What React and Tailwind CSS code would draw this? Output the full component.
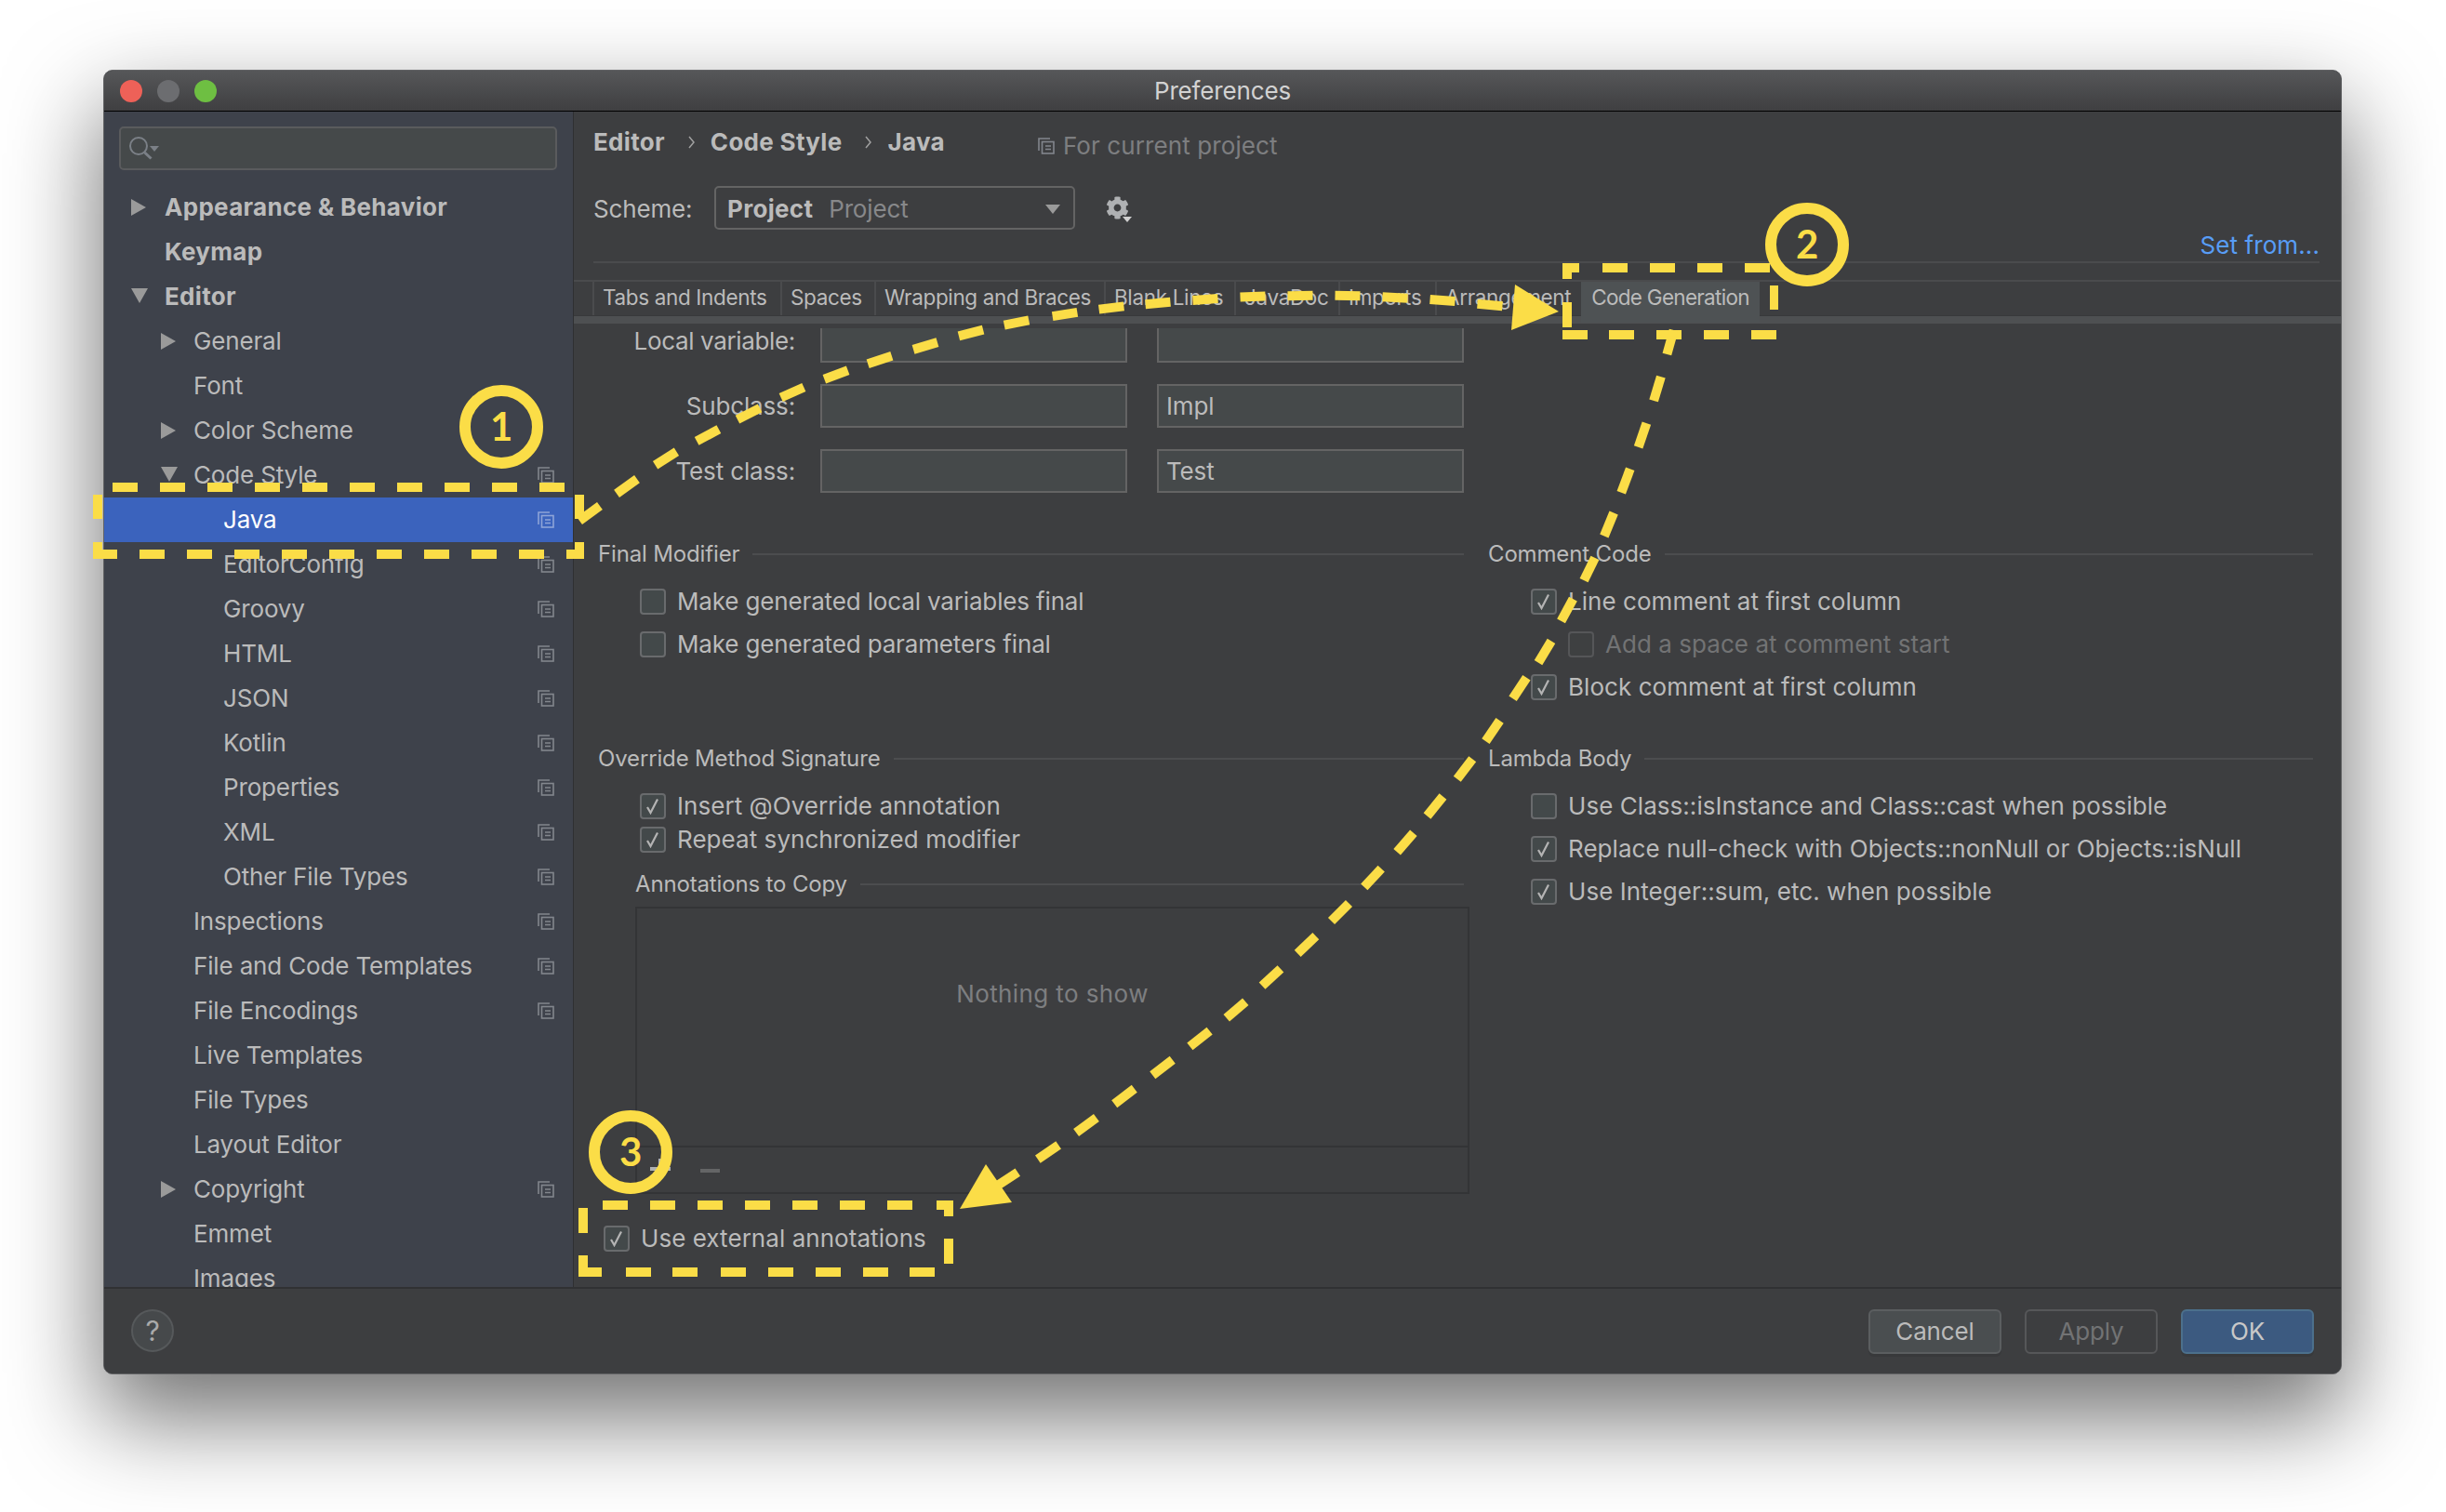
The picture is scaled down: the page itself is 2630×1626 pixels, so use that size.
import { FaCog } from 'react-icons/fa';

const YELLOW = '#fbdd47';

const tree = [
  { label: 'Appearance & Behavior', level: 0, arrow: 'right' },
  { label: 'Keymap', level: 0 },
  { label: 'Editor', level: 0, arrow: 'down' },
  { label: 'General', level: 1, arrow: 'right' },
  { label: 'Font', level: 1 },
  { label: 'Color Scheme', level: 1, arrow: 'right' },
  { label: 'Code Style', level: 1, arrow: 'down', copy: true },
  { label: 'Java', level: 2, copy: true, selected: true },
  { label: 'EditorConfig', level: 2, copy: true },
  { label: 'Groovy', level: 2, copy: true },
  { label: 'HTML', level: 2, copy: true },
  { label: 'JSON', level: 2, copy: true },
  { label: 'Kotlin', level: 2, copy: true },
  { label: 'Properties', level: 2, copy: true },
  { label: 'XML', level: 2, copy: true },
  { label: 'Other File Types', level: 2, copy: true },
  { label: 'Inspections', level: 1, copy: true },
  { label: 'File and Code Templates', level: 1, copy: true },
  { label: 'File Encodings', level: 1, copy: true },
  { label: 'Live Templates', level: 1 },
  { label: 'File Types', level: 1 },
  { label: 'Layout Editor', level: 1 },
  { label: 'Copyright', level: 1, arrow: 'right', copy: true },
  { label: 'Emmet', level: 1 },
  { label: 'Images', level: 1 },
];

const tabs = [
  { label: 'Tabs and Indents', width: 'w-[202px]' },
  { label: 'Spaces', width: 'w-[101px]' },
  { label: 'Wrapping and Braces', width: 'w-[247px]' },
  { label: 'Blank Lines', width: 'w-[140px]' },
  { label: 'JavaDoc', width: 'w-[112px]' },
  { label: 'Imports', width: 'w-[104px]' },
  { label: 'Arrangement', width: 'w-[157px]' },
];

// centres of the hand-drawn dashes, read off the screenshot
const curveOne = [
  [634, 552], [674, 523], [716, 493], [761, 468], [805, 445], [852, 422], [899, 403], [946, 387], [995, 372],
  [1044, 358], [1093, 347], [1145, 338], [1195, 331], [1245, 326], [1296, 322], [1347, 319], [1398, 318],
  [1449, 318], [1500, 320], [1551, 323], [1602, 328],
];
const curveTwo = [
  [1796, 368], [1782, 418], [1766, 468], [1748, 517], [1730, 564], [1709, 612], [1685, 656], [1661, 701],
  [1634, 740], [1605, 786], [1575, 827], [1543, 867], [1511, 906], [1476, 944], [1441, 981], [1405, 1016],
  [1367, 1051], [1329, 1086], [1290, 1117], [1250, 1148], [1209, 1179], [1168, 1210], [1127, 1239], [1083, 1268],
];
const boxDashes = [
  // box 1
  ...[121, 172, 223, 274, 325, 376, 427, 478, 529, 580].map((x) => [x, 519, 27, 10]),
  [100, 532, 10, 26], [100, 583, 10, 18], [100, 591, 26, 10],
  ...[150, 201, 252, 303, 354, 405, 456, 507, 558].map((x) => [x, 591, 27, 10]),
  [609, 591, 19, 10], [618, 583, 10, 18], [618, 532, 10, 26],
  // box 2
  [1680, 283, 10, 17], [1680, 283, 18, 10],
  ...[1723, 1774, 1825, 1876].map((x) => [x, 283, 27, 10]),
  [1680, 325, 10, 27], [1903, 307, 9, 26],
  ...[1680, 1730, 1781, 1832, 1883].map((x) => [x, 355, 27, 10]),
  // box 3
  ...[648, 699, 750, 801, 852, 903, 954].map((x) => [x, 1291, 27, 10]),
  [1007, 1291, 18, 10], [1015, 1291, 10, 17], [1015, 1332, 10, 27],
  [622, 1299, 10, 27], [622, 1350, 10, 23], [622, 1363, 25, 10],
  ...[673, 723, 775, 826, 877, 928, 978].map((x) => [x, 1363, 27, 10]),
];

function CurveDashes({ points }) {
  return points.map(([x, y], i) => {
    const [px, py] = points[Math.max(i - 1, 0)];
    const [nx, ny] = points[Math.min(i + 1, points.length - 1)];
    const len = Math.hypot(nx - px, ny - py);
    const dx = ((nx - px) / len) * 13.5;
    const dy = ((ny - py) / len) * 13.5;
    return <line key={i} x1={x - dx} y1={y - dy} x2={x + dx} y2={y + dy} stroke={YELLOW} strokeWidth="10" />;
  });
}

function Annotations() {
  const circles = [
    [539, 459, '1'],
    [1943, 263, '2'],
    [678, 1239, '3'],
  ];
  return (
    <svg className="absolute inset-0 pointer-events-none" width="2630" height="1626" viewBox="0 0 2630 1626">
      {boxDashes.map(([x, y, w, h], i) => (
        <rect key={i} x={x} y={y} width={w} height={h} fill={YELLOW} />
      ))}
      <CurveDashes points={curveOne} />
      <CurveDashes points={curveTwo} />
      <polygon points="1676,335 1629,306 1625,355" fill={YELLOW} />
      <polygon points="1032,1300 1060,1252 1088,1293" fill={YELLOW} />
      {circles.map(([cx, cy, n]) => (
        <g key={n}>
          <circle cx={cx} cy={cy} r="39" fill="none" stroke={YELLOW} strokeWidth="12" />
          <text x={cx} y={cy + 15} textAnchor="middle" fill={YELLOW} fontSize="42" fontWeight="700" fontFamily="Lato, sans-serif">
            {n}
          </text>
        </g>
      ))}
    </svg>
  );
}

function CopyIcon({ className }) {
  return (
    <svg className={className} width="18" height="18" viewBox="0 0 18 18" fill="none" stroke="currentColor" strokeWidth="1.6">
      <path d="M1 14V1h12" />
      <rect x="4.5" y="4.5" width="12.5" height="12.5" />
      <path d="M8 9h6M8 12.5h6" />
    </svg>
  );
}

function Arrow({ dir }) {
  if (dir === 'down') {
    return (
      <svg width="18" height="16" viewBox="0 0 18 16" className="text-[#9a9a9a]">
        <path d="M0 0h18L9 16z" fill="currentColor" />
      </svg>
    );
  }
  return (
    <svg width="16" height="18" viewBox="0 0 16 18" className="text-[#9a9a9a]">
      <path d="M0 0l16 9-16 9z" fill="currentColor" />
    </svg>
  );
}

function TreeRow({ item }) {
  const indent = { 0: 'pl-[65px]', 1: 'pl-[96px]', 2: 'pl-[128px]' }[item.level];
  const arrowPos = item.level === 0 ? 'left-[29px]' : 'left-[61px]';
  return (
    <div className={`relative h-12 shrink-0 flex items-center ${indent} ${item.selected ? 'bg-[#3b63bd] text-white' : 'text-[#bbbbbb]'} ${item.level === 0 ? 'font-bold tracking-[0.3px]' : ''}`}>
      {item.arrow && (
        <span className={`absolute ${arrowPos} top-[15px]`}>
          <Arrow dir={item.arrow} />
        </span>
      )}
      <span>{item.label}</span>
      {item.copy && <CopyIcon className={`absolute left-[466px] top-[15px] ${item.selected ? 'text-[#8ea4d8]' : 'text-[#82868d]'}`} />}
    </div>
  );
}

function Sidebar() {
  return (
    <div className="w-[505px] shrink-0 bg-[#3e424b] border-r border-[#2f3032] overflow-hidden flex flex-col">
      <div className="ml-4 mt-4 w-[471px] h-[47px] shrink-0 rounded-[5px] border-2 border-[#5a5b5d] bg-[#45494a] flex items-center pl-[8px]">
        <svg width="34" height="30" viewBox="0 0 34 30" fill="none" stroke="#7b8087">
          <circle cx="11" cy="12" r="9" strokeWidth="2" />
          <path d="M17.5 19l7 6.500" strokeWidth="3" />
          <path d="M23 12h10l-5 6z" fill="#7b8087" stroke="none" />
        </svg>
      </div>
      <div className="mt-4 flex flex-col">
        {tree.map((item) => (
          <TreeRow key={item.label} item={item} />
        ))}
      </div>
    </div>
  );
}

function Check({ on, dim }) {
  return (
    <span className={`w-[28px] h-[28px] shrink-0 rounded-[4px] border-2 flex items-center justify-center ${dim ? 'border-[#555658] bg-[#3e4041]' : 'border-[#696b6d] bg-[#43494a]'}`}>
      {on && (
        <svg width="18" height="18" viewBox="0 0 18 18" fill="none" stroke="#b4b4b4" strokeWidth="2.200">
          <path d="M3 10l3.500 6L14 1.500" />
        </svg>
      )}
    </span>
  );
}

function CheckRow({ label, on, dim, tight, className = '' }) {
  return (
    <div className={`h-[28px] flex items-center gap-3 ${tight ? 'tracking-[-0.15px]' : 'tracking-[0.05px]'} ${dim ? 'text-[#727374]' : 'text-[#bbbbbb]'} ${className}`}>
      <Check on={on} dim={dim} />
      <span className="whitespace-nowrap">{label}</span>
    </div>
  );
}

function GroupTitle({ title, className = '' }) {
  return (
    <div className={`h-[30px] flex items-center gap-3.5 text-[#bbbbbb] text-[24px] ${className}`}>
      <span className="whitespace-nowrap">{title}</span>
      <span className="flex-1 h-0.5 bg-[#4c4d4f]" />
    </div>
  );
}

function NameField({ value, className = '' }) {
  return (
    <div className={`bg-[#45494a] border-2 border-[#646464] flex items-center pl-2 text-[#bbbbbb] ${className}`}>
      {value}
    </div>
  );
}

function FieldRow({ label, suffix, top, short }) {
  const h = short ? 'h-[37px] border-t-0' : 'h-[47px]';
  return (
    <div className={`flex items-center ${top}`}>
      <div className={`w-[238px] text-right text-[#bbbbbb] ${short ? '-mt-[10px] tracking-[-0.35px]' : ''}`}>{label}</div>
      <NameField className={`ml-[27px] w-[330px] ${h}`} />
      <NameField value={suffix} className={`ml-[32px] w-[330px] ${h}`} />
    </div>
  );
}

function Crumb({ className }) {
  return (
    <svg className={`ml-[24px] ${className}`} width="9" height="14" viewBox="0 0 9 14" fill="none" stroke="#a0a0a0" strokeWidth="1.500">
      <path d="M2 1l5 6-5 6" />
    </svg>
  );
}

function MainPane() {
  return (
    <div className="flex-1 min-w-0 flex flex-col overflow-hidden">
      {/* Header */}
      <div className="h-[66px] shrink-0 pl-[21px] flex items-center font-bold tracking-[0.3px] text-[#bbbbbb]">
        <span>Editor</span>
        <Crumb className="mr-[16px]" />
        <span>Code Style</span>
        <Crumb className="mr-[16px]" />
        <span>Java</span>
        <CopyIcon className="ml-[100px] mt-2 text-[#82868d]" />
        <span className="ml-[9px] mt-2 font-normal tracking-[0.1px] text-[#7d7e80]">For current project</span>
      </div>
      <div className="mt-[14px] h-[47px] shrink-0 pl-[21px] flex items-center text-[#bbbbbb]">
        <span className="w-[130px] shrink-0 mt-[2px]">Scheme:</span>
        <div className="w-[388px] h-[47px] rounded-[5px] border-2 border-[#646464] flex items-center pl-[12px] relative">
          <span className="font-bold tracking-[0.3px] mt-[2px]">Project</span>
          <span className="ml-[17px] mt-[2px] text-[#87888a]">Project</span>
          <svg className="absolute right-[14px] top-[18px]" width="16" height="10" viewBox="0 0 16 10">
            <path d="M0 0h16L8 10z" fill="#9a9a9a" />
          </svg>
        </div>
        <div className="ml-[33px] relative">
          <FaCog className="text-[#afb1b3] w-[25px] h-[25px]" />
          <svg className="absolute left-[18px] top-[22px]" width="10" height="6" viewBox="0 0 10 6">
            <path d="M0 0h10L5 6z" fill="#d0d0d0" />
          </svg>
        </div>
      </div>
      <div className="h-[34px] shrink-0 flex items-center justify-end pr-[23px] tracking-[0.1px] text-[#589df6]">Set from...</div>
      <div className="h-0.5 shrink-0 ml-[21px] mr-[23px] bg-[#4a4b4d]" />
      {/* Tabs */}
      <div className="mt-[18px] shrink-0 border-t-2 border-[#4a4b4d]">
        <div className="h-[36px] pl-5 flex text-[22.500px] tracking-[-0.35px] text-[#bbbbbb]">
          {tabs.map((tab) => (
            <div key={tab.label} className={`${tab.width} border-l-2 border-[#4a4b4d] flex items-center pl-[9px] pb-[2px] whitespace-nowrap`}>
              {tab.label}
            </div>
          ))}
          <div className="w-[192px] bg-[#4e5254] flex items-center justify-center h-[44px] pb-[10px] z-10 tracking-[-0.7px]">Code Generation</div>
        </div>
        <div className="h-[9px] bg-[#4e5052] border-t border-[#38393b]" />
      </div>
      {/* Naming fields */}
      <div className="mt-[5px] shrink-0">
        <FieldRow label="Local variable:" short />
        <FieldRow label="Subclass:" suffix="Impl" top="mt-[23px]" />
        <FieldRow label="Test class:" suffix="Test" top="mt-[23px]" />
      </div>
      {/* Options */}
      <div className="mt-[51px] pl-[26px] flex gap-[26px]">
        <div className="w-[931px] shrink-0">
          <GroupTitle title="Final Modifier" />
          <div className="mt-[22px] pl-[45px] flex flex-col gap-[18px]">
            <CheckRow label="Make generated local variables final" tight />
            <CheckRow label="Make generated parameters final" tight />
          </div>
          <GroupTitle title="Override Method Signature" className="mt-[94px]" />
          <div className="mt-[22px] pl-[45px] flex flex-col gap-2">
            <CheckRow label="Insert @Override annotation" on />
            <CheckRow label="Repeat synchronized modifier" on />
          </div>
          <GroupTitle title="Annotations to Copy" className="mt-[19px] ml-[40px]" />
          <div className="mt-[9px] ml-[40px] w-[897px] h-[309px] border-2 border-[#333436] flex flex-col">
            <div className="flex-1 pt-[79px] text-center text-[#7d7e80] tracking-[0.4px]">Nothing to show</div>
            <div className="h-[50px] border-t-2 border-[#333436] flex items-center pl-3.5 gap-8">
              <svg className="-mt-[2px]" width="22" height="22" viewBox="0 0 22 22" stroke="#afb1b3" strokeWidth="4">
                <path d="M0 11h22M11 0v22" />
              </svg>
              <span className="w-[21px] h-1 bg-[#646566] mt-[2px]" />
            </div>
          </div>
          <CheckRow label="Use external annotations" on className="mt-[34px] ml-[6px]" />
        </div>
        <div className="w-[887px] shrink-0">
          <GroupTitle title="Comment Code" />
          <div className="mt-[22px] pl-[46px] flex flex-col gap-[18px]">
            <CheckRow label="Line comment at first column" on />
            <CheckRow label="Add a space at comment start" dim className="ml-[40px]" />
            <CheckRow label="Block comment at first column" on />
          </div>
          <GroupTitle title="Lambda Body" className="mt-[48px]" />
          <div className="mt-[22px] pl-[46px] flex flex-col gap-[18px]">
            <CheckRow label="Use Class::isInstance and Class::cast when possible" />
            <CheckRow label="Replace null-check with Objects::nonNull or Objects::isNull" on />
            <CheckRow label="Use Integer::sum, etc. when possible" on />
          </div>
        </div>
      </div>
    </div>
  );
}

function Footer() {
  return (
    <div className="h-[93px] shrink-0 border-t-2 border-[#303133] bg-[#3d3e40] flex items-start pt-[22px] pl-[29px] pr-[29px]">
      <div className="w-[46px] h-[46px] rounded-full bg-[#46494b] border-2 border-[#56595b] flex items-center justify-center text-[30px] text-[#aaaaaa]">?</div>
      <div className="ml-auto flex gap-[25px]">
        <button className="w-[143px] h-[48px] rounded-[6px] border-2 border-[#5b5e60] bg-[#4a4e50] text-[#bbbbbb] shadow-[0_3px_0_#38393b]">Cancel</button>
        <button className="w-[143px] h-[48px] rounded-[6px] border-2 border-[#565759] text-[#727374]">Apply</button>
        <button className="w-[143px] h-[48px] rounded-[6px] border-2 border-[#4c708c] bg-[#3c5a80] text-[#c8c8c8] shadow-[0_3px_0_#38393b]">OK</button>
      </div>
    </div>
  );
}

export default function App() {
  return (
    <div className="relative w-[2630px] h-[1626px] bg-white overflow-hidden pt-[75px] pl-[111px] font-['Inter','Noto_Sans',sans-serif] text-[26px] leading-none tracking-[-0.15px]">
      <div className="w-[2407px] h-[1403px] flex flex-col rounded-[10px] overflow-hidden border border-[#626365] bg-[#3d3e40] shadow-[0_44px_100px_4px_rgba(0,0,0,0.55)]">
        {/* Title bar */}
        <div className="relative h-[44px] shrink-0 flex items-center justify-center border-b border-black bg-gradient-to-b from-[#565759] to-[#3f3f41] text-[#d2d2d2]">
          <div className="absolute left-[17px] top-[10px] flex gap-4">
            <span className="w-6 h-6 rounded-full bg-[#ee6158]" />
            <span className="w-6 h-6 rounded-full bg-[#6c6d70]" />
            <span className="w-6 h-6 rounded-full bg-[#6ebf42]" />
          </div>
          Preferences
        </div>
        <div className="h-[1264px] shrink-0 flex">
          <Sidebar />
          <MainPane />
        </div>
        <Footer />
      </div>
      <Annotations />
    </div>
  );
}
